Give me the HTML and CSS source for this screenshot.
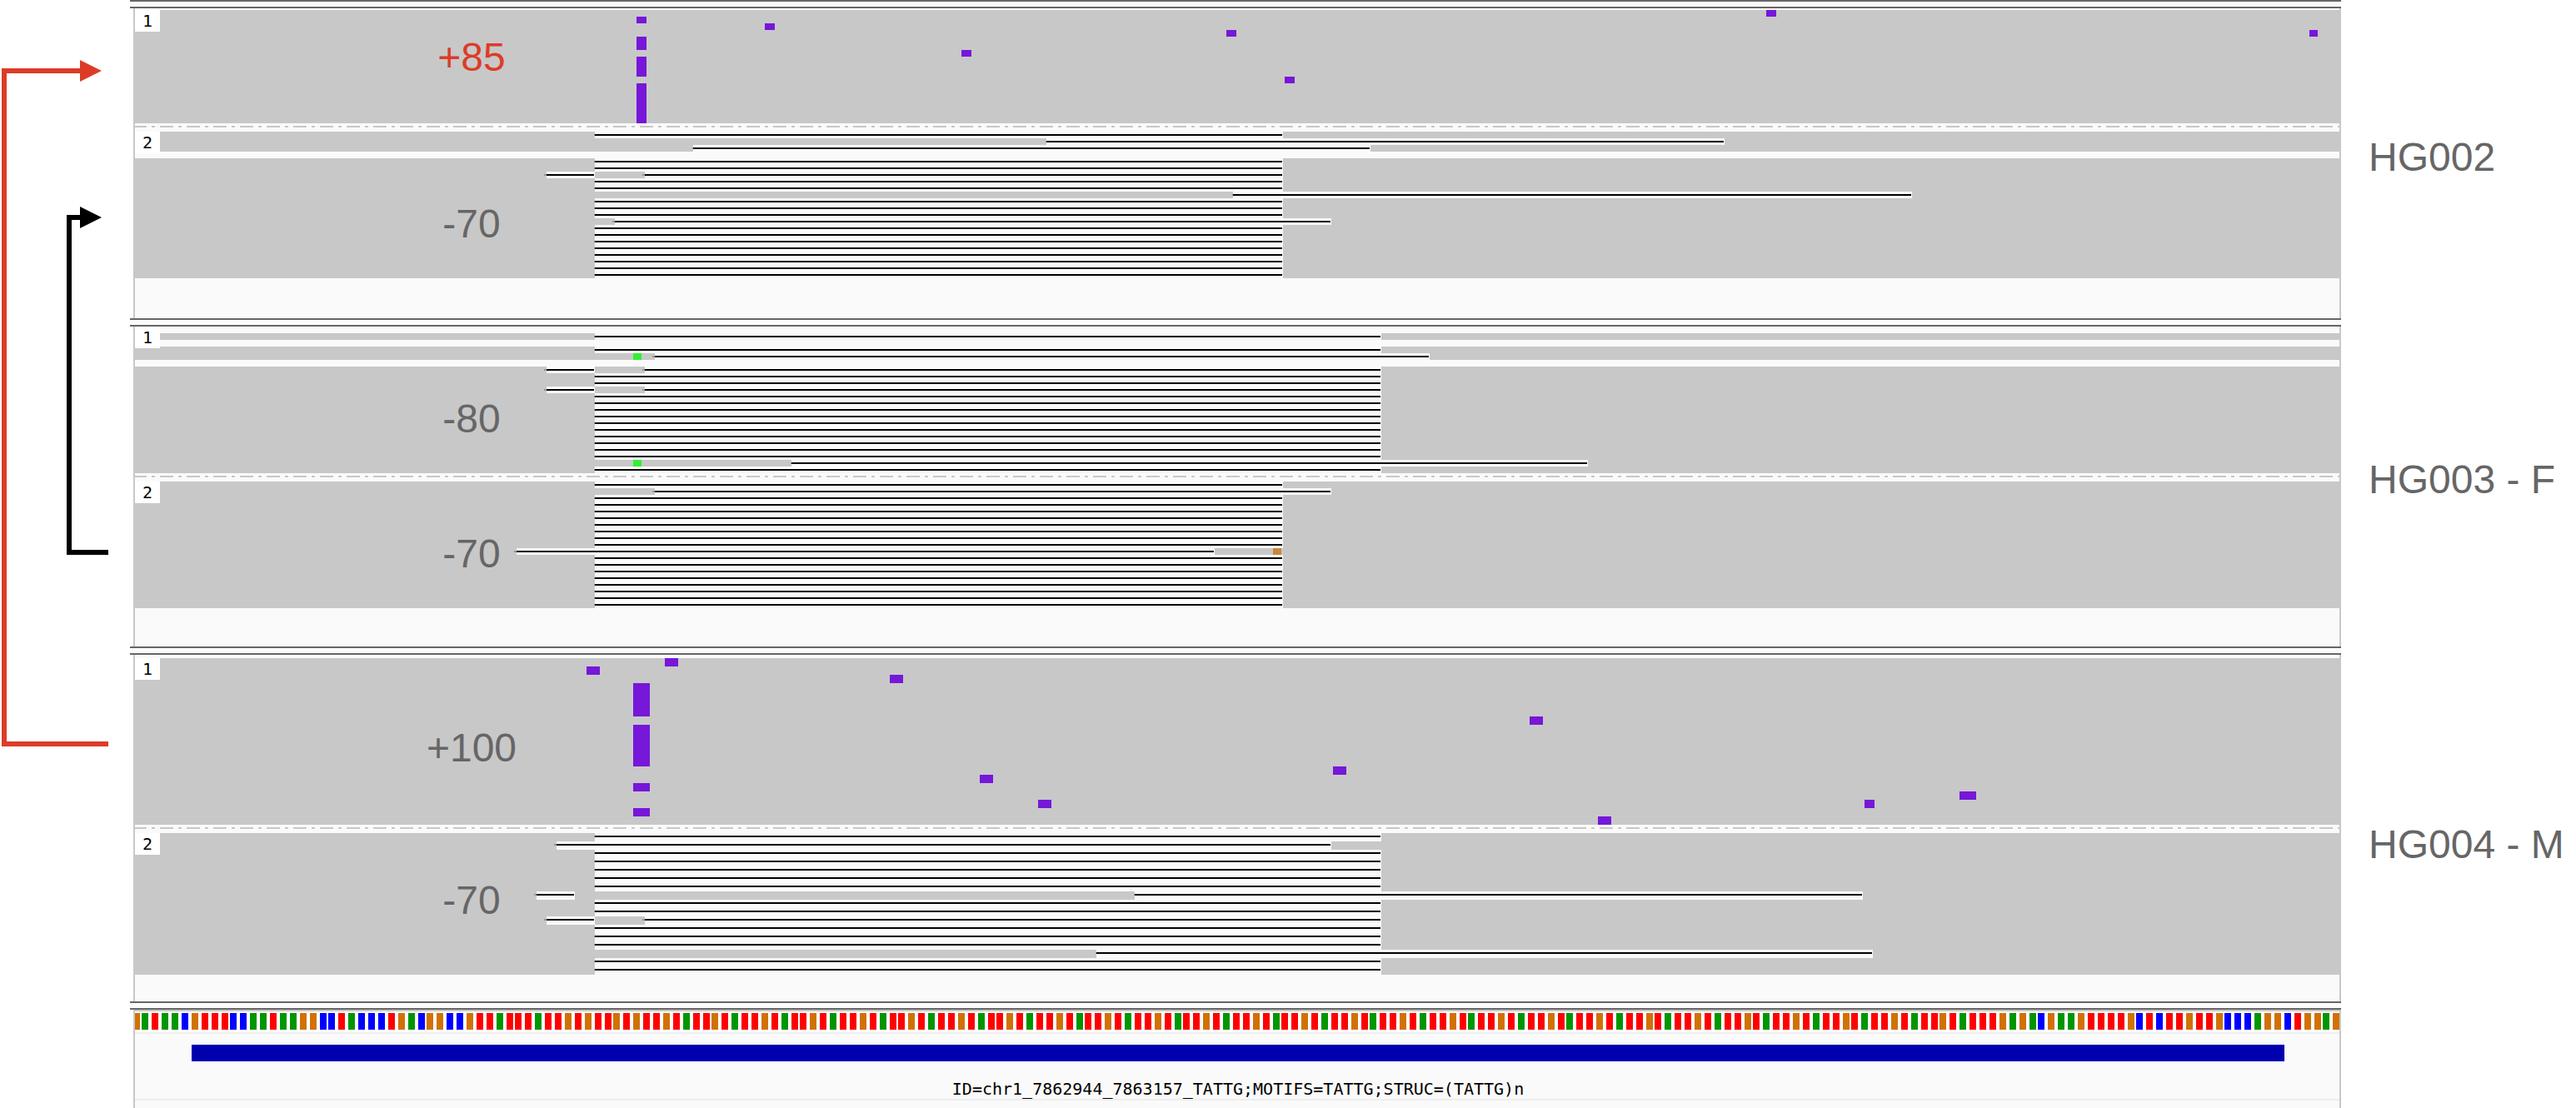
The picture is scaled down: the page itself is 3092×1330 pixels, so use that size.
FILE: index.html
```html
<!DOCTYPE html>
<html lang="en">
<head>
    <meta charset="UTF-8">
    <title>STR genotypes - HG002 trio</title>
    <link rel="stylesheet" href="styles.css">
    <script src="script.js" defer></script>
</head>
<body>

    <!-- Inheritance arrows, they sit over the left margin -->
    <svg class="arrows" width="156" height="1330" viewBox="0 0 156 1330">
        <path class="arrow-red" d="M130 893H5V85H100"/>
        <polygon class="head-red" points="96,72 122,85 96,98"/>
        <path class="arrow-black" d="M130 663H83V261H100"/>
        <polygon class="head-black" points="96,248 122,261 96,274"/>
    </svg>

    <div class="page">
        <!-- HG002 -->
        <div class="sample sample-a">
            <div class="panel">
                <div class="rules"></div>
                <div class="tracks">
                    <div class="track" id="a1"></div>
                    <div class="dash"></div>
                    <div class="track" id="a2"></div>
                    <div class="filler"></div>
                </div>
            </div>
            <div class="sample-name">HG002</div>
        </div>

        <!-- HG003 -->
        <div class="sample sample-b">
            <div class="panel">
                <div class="rules"></div>
                <div class="tracks">
                    <div class="track" id="b1"></div>
                    <div class="dash"></div>
                    <div class="track" id="b2"></div>
                    <div class="filler"></div>
                </div>
            </div>
            <div class="sample-name">HG003 - F</div>
        </div>

        <!-- HG004 -->
        <div class="sample sample-c">
            <div class="panel">
                <div class="rules"></div>
                <div class="tracks">
                    <div class="track" id="c1"></div>
                    <div class="dash"></div>
                    <div class="track" id="c2"></div>
                    <div class="filler"></div>
                </div>
            </div>
            <div class="sample-name">HG004 - M</div>
        </div>

        <!-- Reference sequence and repeat annotation -->
        <div class="panel locus">
            <div class="rules"></div>
            <div class="tracks">
                <div class="seq-top"></div>
                <div class="sequence" id="sequence"></div>
                <div class="feature"><div class="feature-bar"></div></div>
                <div class="feature-name">ID=chr1_7862944_7863157_TATTG;MOTIFS=TATTG;STRUC=(TATTG)n</div>
                <div class="filler"></div>
            </div>
        </div>
    </div>

</body>
</html>
```

FILE: styles.css
```css
html, body {
    margin: 0;
    background-color: #fff;
}

body {
    width: 3092px;
    height: 1330px;
    overflow: hidden;
    position: relative;
    font-family: "Liberation Sans", Arial, sans-serif;
}

.arrows {
    position: absolute;
    top: 0;
    left: 0;
}

.arrow-red {
    fill: none;
    stroke: #dc3c27;
    stroke-width: 6;
}

.head-red {
    fill: #dc3c27;
}

.arrow-black {
    fill: none;
    stroke: #000;
    stroke-width: 6;
}

.head-black {
    fill: #000;
}

.page {
    display: flex;
    flex-direction: column;
    padding-left: 156px;
}

.sample {
    display: flex;
}

.sample-a {
    height: 382px;
}

.sample-b {
    height: 394px;
}

.sample-c {
    height: 426px;
}

.panel {
    width: 2654px;
    height: 100%;
    display: flex;
    flex-direction: column;
    flex-shrink: 0;
}

/* double grey rule on top of each panel */
.rules {
    height: 6px;
    flex-shrink: 0;
    border-top: 2px solid #666;
    border-bottom: 2px solid #666;
    background-color: #fafafa;
}

.tracks {
    flex: 1;
    display: flex;
    flex-direction: column;
    margin: 0 0 0 4px;
    width: 2650px;
    box-sizing: border-box;
    border-left: 2px solid #c8c8c8;
    border-right: 2px solid #c8c8c8;
    background-color: #fafafa;
}

.sample-a .tracks {
    padding-top: 2px;
}

.sample-c .tracks {
    padding-top: 4px;
}

.track {
    position: relative;
}

.track svg {
    display: block;
}

.track-no {
    position: absolute;
    top: 0;
    left: 0;
    width: 30px;
    height: 26px;
    background-color: #fff;
    color: #000;
    font: 20px/26px "DejaVu Sans Mono", monospace;
    text-align: center;
}

.track-value {
    position: absolute;
    left: 304px;
    width: 200px;
    font-size: 48px;
    line-height: 48px;
    color: #666;
    text-align: center;
}

.track-value.red {
    color: #dc3c27;
}

/* dash dot line between the two haplotypes */
.dash {
    height: 2px;
    margin: 3px 0 5px;
    background-image: linear-gradient(to right, #c8c8c8 16px, transparent 16px, transparent 22px, #c8c8c8 22px, #c8c8c8 26px, transparent 26px);
    background-size: 32px 2px;
    background-position: 30px 0;
}

.filler {
    flex: 1;
}

.sample-name {
    font-size: 48px;
    line-height: 48px;
    color: #666;
    margin-left: 33px;
    white-space: nowrap;
}

.sample-a .sample-name {
    margin-top: 165px;
}

.sample-b .sample-name {
    margin-top: 170px;
}

.sample-c .sample-name {
    margin-top: 214px;
}

.locus {
    height: 128px;
}

.seq-top {
    height: 2px;
    margin-bottom: 2px;
    background-color: #c8c8c8;
}

.sequence {
    height: 20px;
    background-color: #fff;
    padding-bottom: 3px;
    border-bottom: 2px solid #eee;
}

.sequence svg {
    display: block;
}

.feature {
    height: 78px;
    box-sizing: border-box;
    padding: 13px 66px 0 68px;
}

.feature-bar {
    height: 20px;
    background-color: #0000ae;
}

.feature-name {
    height: 0;
    line-height: 20px;
    margin-top: -22px;
    padding: 0 0 22px 2px;
    color: #000;
    font-family: "DejaVu Sans Mono", monospace;
    font-size: 20px;
    text-align: center;
    border-bottom: 2px solid #eee;
}
```

FILE: script.js
```js
// Draws the read pileups and the reference sequence

var LEFT = 162;      // page x of the first track pixel
var WIDTH = 2646;

var GREY = '#c8c8c8';
var PAPER = '#fafafa';
var PURPLE = '#7617d9';
var GREEN = '#33f033';
var ORANGE = '#c8883a';

function rect(x, y, w, h, color) {
    return '<rect x="' + (x - LEFT) + '" y="' + y + '" width="' + w + '" height="' + h + '" fill="' + color + '"/>';
}

// A row is a list of deletions [start, end], or null for an empty row.
// Extra marks are [x, width, color].
function drawTrack(id, conf) {
    var rowH = conf.rowH;
    var rows = conf.rows || [];
    var height = conf.height || rows.length * rowH;
    var out = rect(LEFT, 0, WIDTH, height, GREY);

    rows.forEach(function (row, i) {
        var y = i * rowH;
        if (row === null) {
            out += rect(LEFT, y, WIDTH, rowH, PAPER);
            return;
        }
        row.forEach(function (d) {
            var s = d[0], e = d[1];
            if (d.length === 3) {
                out += rect(s, y, e - s, rowH, d[2]);
                return;
            }
            var tick = (s < 800 && s !== 714) ? 3 : 1;
            out += rect(s, y, e - s, rowH, PAPER);
            out += rect(s - tick, y + 3, tick, 2, '#969696');
            out += rect(s, y + 3, e - s - 1, 2, '#000');
        });
    });

    (conf.blocks || []).forEach(function (b) {
        out += rect(b[0], b[2], b[1] - b[0], b[3] - b[2], PURPLE);
    });

    var el = document.getElementById(id);
    el.innerHTML = '<svg width="' + WIDTH + '" height="' + height + '">' + out + '</svg>';

    var no = document.createElement('div');
    no.className = 'track-no';
    no.textContent = conf.no;
    el.appendChild(no);

    var value = document.createElement('div');
    value.className = conf.red ? 'track-value red' : 'track-value';
    value.textContent = conf.value;
    value.style.top = conf.valueTop + 'px';
    el.appendChild(value);
}

// HG002
var A = [[714, 1540]];
drawTrack('a1', {
    no: '1', value: '+85', valueTop: 33, red: true, height: 136,
    blocks: [
        [764, 776, 8, 16], [764, 776, 32, 48], [764, 776, 56, 80], [764, 776, 88, 136],
        [918, 930, 16, 24], [1472, 1484, 24, 32], [1154, 1166, 48, 56], [1542, 1554, 80, 88],
        [2120, 2132, 0, 8], [2772, 2782, 24, 32]
    ]
});
drawTrack('a2', {
    no: '2', value: '-70', valueTop: 87, rowH: 8,
    rows: [
        A, [[1256, 2070]], [[832, 1645]], null, A, A,
        [[656, 714], [774, 1540]], A, A, [[1480, 2295]],
        A, A, A, [[738, 1598]],
        A, A, A, A, A, A, A, A
    ]
});

// HG003
var B = [[714, 1658]];
var B2 = [[656, 714], [774, 1658]];
drawTrack('b1', {
    no: '1', value: '-80', valueTop: 87, rowH: 8,
    rows: [
        null, B, null, B,
        [[760, 770, GREEN], [786, 1716]], null, B2, B, B, B2,
        B, B, B, B, B, B, B, B, B, B,
        [[760, 770, GREEN], [950, 1906]], B
    ]
});
drawTrack('b2', {
    no: '2', value: '-70', valueTop: 63, rowH: 8,
    rows: [
        A, [[786, 1598]], A, A, A, A, A, A, A, A,
        [[620, 1458], [1528, 1538, ORANGE]],
        A, A, A, A, A, A, A, A
    ]
});

// HG004
drawTrack('c1', {
    no: '1', value: '+100', valueTop: 84, height: 200,
    blocks: [
        [704, 720, 10, 20], [798, 814, 0, 10],
        [760, 780, 30, 70], [760, 780, 80, 130], [760, 780, 150, 160], [760, 780, 180, 190],
        [1068, 1084, 20, 30], [1836, 1852, 70, 80], [1176, 1192, 140, 150], [1600, 1616, 130, 140],
        [1246, 1262, 170, 180], [2352, 2372, 160, 170], [2238, 2250, 170, 180], [1918, 1934, 190, 200]
    ]
});
drawTrack('c2', {
    no: '2', value: '-70', valueTop: 57, rowH: 10,
    rows: [
        B, [[668, 1598]], B, B, B, B, B,
        [[644, 690], [1362, 2236]], B, B,
        [[656, 714], [774, 1658]], B, B, B,
        [[1316, 2248]], B, B
    ]
});

// Reference sequence, drawn as coloured bases
var BASES = 'GATAACGTTT' + 'CCAATAAGGC' + 'CTACCCTGAC' + 'GGCCGTTATT' + 'TATTGTGTTG' + 'TGTTGTATTG' + 'TATTGTATTG' + 'T';
for (var i = 71; i <= 188; i++) {
    BASES += 'ATTGT'.charAt((i - 71) % 5);
}
BASES += 'TGAGACGAAGTTTTGCTCTTGTTGCCCAGGCTGGAG';

var BASE_COLORS = { A: '#009600', C: '#0000ff', G: '#d17105', T: '#ff0000' };

var seq = '';
for (var n = 0; n < BASES.length; n++) {
    // bases snap to even pixels, so a step is sometimes 10 instead of 12
    var x = 2 * Math.floor((160.05 + n * 11.793) / 2);
    seq += rect(x, 0, 8, 20, BASE_COLORS[BASES.charAt(n)]);
}
document.getElementById('sequence').innerHTML = '<svg width="' + WIDTH + '" height="20">' + seq + '</svg>';
```
